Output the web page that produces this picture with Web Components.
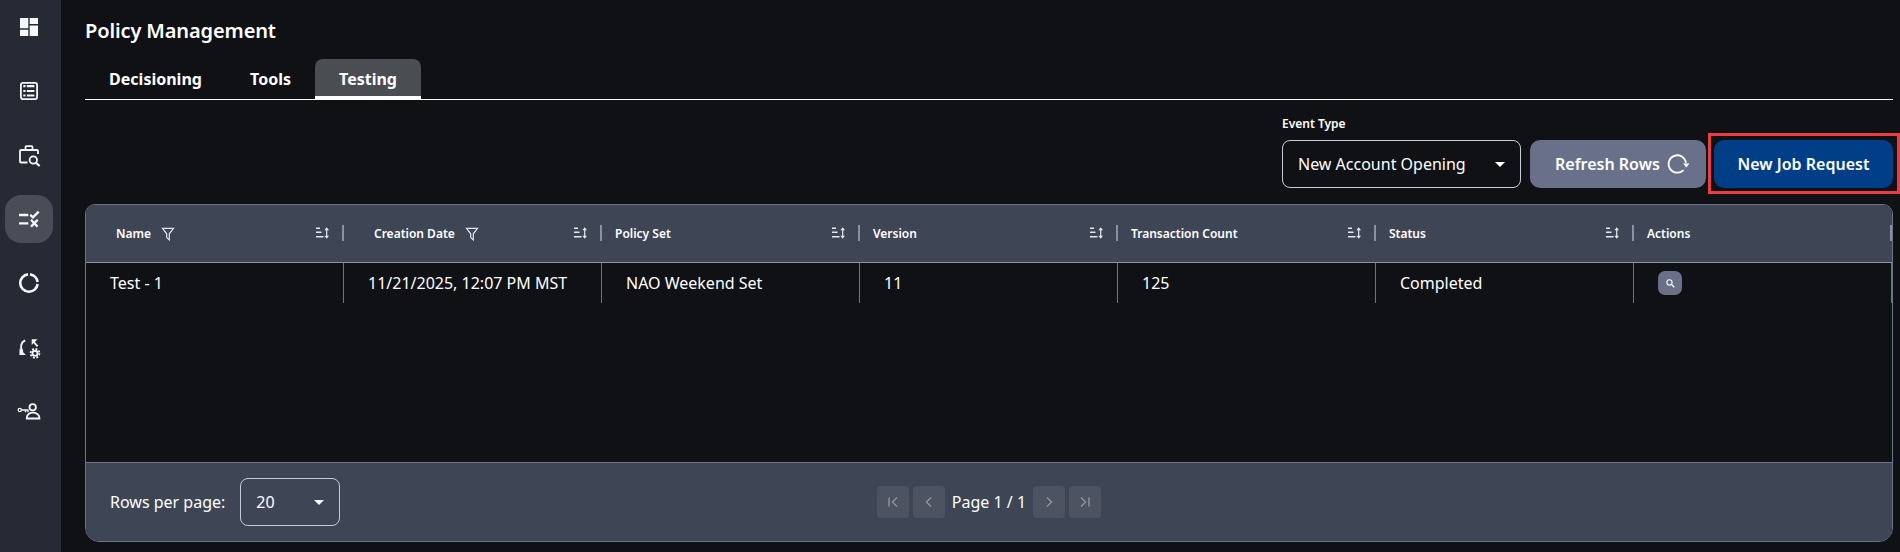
<!DOCTYPE html>
<html>
<head>
<meta charset="utf-8">
<title>Policy Management</title>
<style>
    html, body { margin: 0; height: 100%; background: #0f1115; overflow: hidden; }
    body { font-family: "Noto Sans", sans-serif; color: #fff; }
</style>
</head>
<body>
<app-shell>
    <side-nav slot="nav"></side-nav>
    <page-title>Policy Management</page-title>
    <tab-bar></tab-bar>
    <job-toolbar></job-toolbar>
    <jobs-table></jobs-table>
</app-shell>

<script>
const ICONS = {
    dashboard: '<path fill="currentColor" d="M3 3h8.300v10.300H3zM12.700 3H21v6H12.700zM12.700 10.400H21V21H12.700zM3 14.700h8.300V21H3z"/>',
    list: '<rect x="3.900" y="3.900" width="16.200" height="16.200" rx="2" fill="none" stroke="currentColor" stroke-width="1.800"/><path fill="currentColor" d="M6.300 6h2.200v2.200H6.300zM9.800 6h7.600v2.200H9.800zM6.300 10.900h2.200v2.200H6.300zM9.800 10.900h7.600v2.200H9.800zM6.300 15.400h2.200v2.200H6.300zM9.800 15.400h7.600v2.200H9.800z"/>',
    caseSearch: '<path fill="none" stroke="currentColor" stroke-width="1.800" d="M10.500 19.500H4a1 1 0 0 1-1-1V8a1 1 0 0 1 1-1h16a1 1 0 0 1 1 1v3M8.500 7V4.200a1 1 0 0 1 1-1h5a1 1 0 0 1 1 1V7"/><circle cx="16.300" cy="17" r="3.700" fill="none" stroke="currentColor" stroke-width="1.800"/><path stroke="currentColor" stroke-width="2.200" d="M19 19.700l3.600 3.300"/>',
    rules: '<path fill="none" stroke="currentColor" stroke-width="2.300" d="M2 8h9.300M2 16.300h9.300M13.300 7.800l2.700 2.500L21.700 4.600M14 12.800l6.500 6.800M20.700 12.800L14 19.600"/>',
    donut: '<path fill="none" stroke="currentColor" stroke-width="2.600" d="M11 3.400a8.700 8.700 0 1 0 9.600 9.600M13 3.400a8.700 8.700 0 0 1 7.600 7.600"/>',
    cycle: '<path fill="none" stroke="currentColor" stroke-width="1.900" d="M8.200 5.300C4 7 2.600 12.600 5.600 16.800M16 6l4.600 5.300"/><path fill="currentColor" d="M2.500 13.500V20H9zM14.700 4.300h5.800L14.700 10z"/><circle cx="18" cy="18.300" r="2.600" fill="none" stroke="currentColor" stroke-width="1.900"/><circle cx="18" cy="18.300" r="4.500" fill="none" stroke="currentColor" stroke-width="1.700" stroke-dasharray="1.900 1.630"/>',
    keyUser: '<circle cx="15.700" cy="8.300" r="3.200" fill="none" stroke="currentColor" stroke-width="1.800"/><path fill="none" stroke="currentColor" stroke-width="1.800" d="M9.800 19.500v-1c0-3 3-4.800 6-4.800s6.600 1.800 6.600 4.800v1z"/><circle cx="2.800" cy="11" r="1.600" fill="none" stroke="currentColor" stroke-width="1.300"/><path fill="none" stroke="currentColor" stroke-width="1.400" d="M4.400 11h7M8.500 11v2.300M11 11v2.300"/>',
    refresh: '<path fill="none" stroke="currentColor" stroke-width="1.800" d="M19.900 10.800A8.700 8.700 0 1 0 17.500 18.100"/><path fill="currentColor" d="M23.500 11.500H17l3.300 4z"/>',
    filter: '<path fill="none" stroke="currentColor" stroke-width="1.200" d="M2.600 2.400h10.800L9.300 7.800V14L6.700 11.600V7.800z"/>',
    sort: '<path fill="currentColor" d="M1 2.600h4v1.400H1zM1 6.600h5.500V8H1zM1 11h7.500v1.400H1z"/><path fill="currentColor" d="M11.700 2.200l2.300 3h-1.700v5.600H14l-2.300 3-2.300-3h1.700V5.200H9.400z"/>',
    search: '<circle cx="6.500" cy="6.500" r="3.800" fill="none" stroke="currentColor" stroke-width="1.500"/><path stroke="currentColor" stroke-width="1.800" d="M9.500 9.500l4 4"/>',
    first: '<path fill="none" stroke="currentColor" stroke-width="1.500" d="M4 3.500v9M12 3.500L7.500 8l4.500 4.500"/>',
    prev: '<path fill="none" stroke="currentColor" stroke-width="1.500" d="M10 3.500L5.500 8l4.500 4.500"/>',
    next: '<path fill="none" stroke="currentColor" stroke-width="1.500" d="M6 3.500L10.500 8 6 12.500"/>',
    last: '<path fill="none" stroke="currentColor" stroke-width="1.500" d="M4 3.500L8.500 8 4 12.500M12 3.500v9"/>'
}

const svg = (name, size, box = 24) =>
    `<svg width="${size}" height="${size}" viewBox="0 0 ${box} ${box}" aria-hidden="true">${ICONS[name]}</svg>`

class BaseElement extends HTMLElement {
    constructor() {
        super()
        this.attachShadow({mode: 'open'})
        const template = document.createElement('template')
        template.innerHTML = this.getTemplate()
        this.shadowRoot.appendChild(template.content.cloneNode(true))
    }
}

class AppShell extends BaseElement {
    getTemplate() {
        return `
            <style>
                :host { display: grid; grid-template-columns: 61px 1fr; height: 552px; }
                main { display: flex; flex-direction: column; padding: 0 7px 0 24px; min-width: 0; }
            </style>
            <slot name="nav"></slot>
            <main><slot></slot></main>
        `
    }
}

class SideNav extends BaseElement {
    getTemplate() {
        const items = ['dashboard', 'list', 'caseSearch', 'rules', 'donut', 'cycle', 'keyUser']
        return `
            <style>
                :host { display: flex; flex-direction: column; align-items: flex-start; gap: 16px; padding: 3px 0 0 5px; background: #252a35; height: 552px; box-sizing: border-box; }
                div { width: 48px; height: 48px; border-radius: 16px; display: flex; align-items: center; justify-content: center; color: #f5f7fc; }
                .active { background: #4a4d57; }
            </style>
            ${items.map(i => `<div class="${i === 'rules' ? 'active' : ''}">${svg(i, 24)}</div>`).join('')}
        `
    }
}

class PageTitle extends BaseElement {
    getTemplate() {
        return `
            <style>
                :host { display: block; padding-top: 17px; height: 42px; font-size: 20px; line-height: 27px; font-weight: 600; letter-spacing: -0.12px; color: #fff; }
            </style>
            <slot></slot>
        `
    }
}

class TabBar extends BaseElement {
    getTemplate() {
        return `
            <style>
                :host { display: flex; height: 41px; box-sizing: border-box; border-bottom: 1px solid #fff; font-size: 16px; font-weight: 700; }
                div { display: flex; align-items: center; justify-content: center; height: 40px; box-sizing: border-box; border-top-left-radius: 8px; border-top-right-radius: 8px; }
                .active { background: #4a4d52; border-bottom: 3px solid #fff; width: 106px; padding-top: 3px; }
            </style>
            <div style="width:141px">Decisioning</div>
            <div style="width:89px">Tools</div>
            <div class="active">Testing</div>
        `
    }
}

class DropSelect extends BaseElement {
    static get observedAttributes() {
        return ['value']
    }

    getTemplate() {
        return `
            <style>
                :host { display: flex; align-items: center; justify-content: space-between; height: 48px; box-sizing: border-box; padding: 0 15px 0 15px; border: 1px solid #c5cbdb; border-radius: 8px; font-size: 16px; color: #fff; }
                i { width: 0; height: 0; border-left: 5px solid transparent; border-right: 5px solid transparent; border-top: 5px solid #fff; }
            </style>
            <span id="val"></span><i></i>
        `
    }

    attributeChangedCallback(name, oldValue, newValue) {
        this.shadowRoot.querySelector('#val').textContent = newValue
    }
}

class JobToolbar extends BaseElement {
    getTemplate() {
        return `
            <style>
                :host { display: flex; justify-content: flex-end; align-items: flex-end; gap: 9px; height: 104px; padding-bottom: 16px; box-sizing: border-box; }
                label { display: block; font-size: 12px; line-height: 16px; font-weight: 600; margin-bottom: 8px; }
                drop-select { width: 239px; }
                button { height: 48px; border: 0; border-radius: 10px; color: #fff; font: 600 16px "Noto Sans", sans-serif; display: flex; align-items: center; padding: 0; }
                .refresh { width: 176px; background: #69718a; padding-left: 25px; gap: 6px; }
                .new { width: 179px; background: #003f87; justify-content: center; }
                .mark { position: relative; display: flex; margin-left: -1px; }
                .mark::after { content: ""; position: absolute; left: -6px; right: -7px; top: -7px; bottom: -6px; border: 3px solid #ee3d42; pointer-events: none; }
            </style>
            <div>
                <label>Event Type</label>
                <drop-select value="New Account Opening"></drop-select>
            </div>
            <button class="refresh">Refresh Rows ${svg('refresh', 24)}</button>
            <div class="mark"><button class="new">New Job Request</button></div>
        `
    }
}

class PagerControls extends BaseElement {
    getTemplate() {
        return `
            <style>
                :host { display: flex; align-items: center; gap: 4px; font-size: 16px; color: #fff; }
                div { width: 32px; height: 32px; border-radius: 4px; background: #4d5361; color: #8d929e; display: flex; align-items: center; justify-content: center; }
                span { padding: 0 3px; }
            </style>
            <div>${svg('first', 16, 16)}</div>
            <div>${svg('prev', 16, 16)}</div>
            <span>Page 1 / 1</span>
            <div>${svg('next', 16, 16)}</div>
            <div>${svg('last', 16, 16)}</div>
        `
    }
}

class JobsTable extends BaseElement {
    getTemplate() {
        const columns = [
            {name: 'Name', filter: true, sort: true, cell: 'Test - 1'},
            {name: 'Creation Date', filter: true, sort: true, cell: '11/21/2025, 12:07 PM MST'},
            {name: 'Policy Set', sort: true, cell: 'NAO Weekend Set'},
            {name: 'Version', sort: true, cell: '11'},
            {name: 'Transaction Count', sort: true, cell: '125'},
            {name: 'Status', sort: true, cell: 'Completed'},
            {name: 'Actions', action: true}
        ]

        const head = columns.map(c => `
            <div class="th ${c.filter ? 'wide' : ''}">
                <span>${c.name}</span>
                ${c.filter ? `<b class="filter">${svg('filter', 16, 16)}</b>` : ''}
                ${c.sort ? `<b class="sort">${svg('sort', 16, 16)}</b>` : ''}
                <em></em>
            </div>`).join('')

        const row = columns.map(c => c.action
            ? `<div class="td"><a>${svg('search', 11, 16)}</a></div>`
            : `<div class="td">${c.cell}</div>`).join('')

        return `
            <style>
                :host { display: flex; flex-direction: column; height: 338px; box-sizing: border-box; border: 1px solid #6b7489; border-radius: 10px 10px 14px 14px; overflow: hidden; }
                .head, .row { display: grid; grid-template-columns: repeat(7, 1fr); }
                .head { height: 58px; background: #3e4555; border-bottom: 1px solid #8b92a6; box-sizing: border-box; font-size: 12px; font-weight: 600; }
                .th { display: flex; align-items: center; gap: 9px; padding-left: 13px; position: relative; }
                .th.wide { padding-left: 30px; }
                .th em { position: absolute; right: 0; top: 20px; width: 2px; height: 16px; background: #8b92a6; }
                .th b { display: flex; font-weight: inherit; color: #e6e8ee; }
                .th .sort { position: absolute; right: 13px; top: 20px; }
                .body { flex: 1; background: #0f1115; }
                .row { height: 40px; font-size: 16px; }
                .td { display: flex; align-items: center; padding-left: 24px; border-right: 1px solid #6b7489; }
                .td a { width: 24px; height: 24px; border-radius: 7px; background: #69718a; color: #fff; display: flex; align-items: center; justify-content: center; }
                .foot { height: 79px; box-sizing: border-box; background: #3e4555; border-top: 1px solid #6b7489; display: grid; grid-template-columns: 1fr auto 1fr; align-items: center; padding: 0 24px; font-size: 16px; }
                .left { display: flex; align-items: center; gap: 15px; }
                drop-select { width: 100px; }
            </style>
            <div class="head">${head}</div>
            <div class="body"><div class="row">${row}</div></div>
            <div class="foot">
                <div class="left"><span>Rows per page:</span><drop-select value="20"></drop-select></div>
                <pager-controls></pager-controls>
                <div></div>
            </div>
        `
    }
}

window.customElements.define('drop-select', DropSelect)
window.customElements.define('pager-controls', PagerControls)
window.customElements.define('app-shell', AppShell)
window.customElements.define('side-nav', SideNav)
window.customElements.define('page-title', PageTitle)
window.customElements.define('tab-bar', TabBar)
window.customElements.define('job-toolbar', JobToolbar)
window.customElements.define('jobs-table', JobsTable)
</script>
</body>
</html>
